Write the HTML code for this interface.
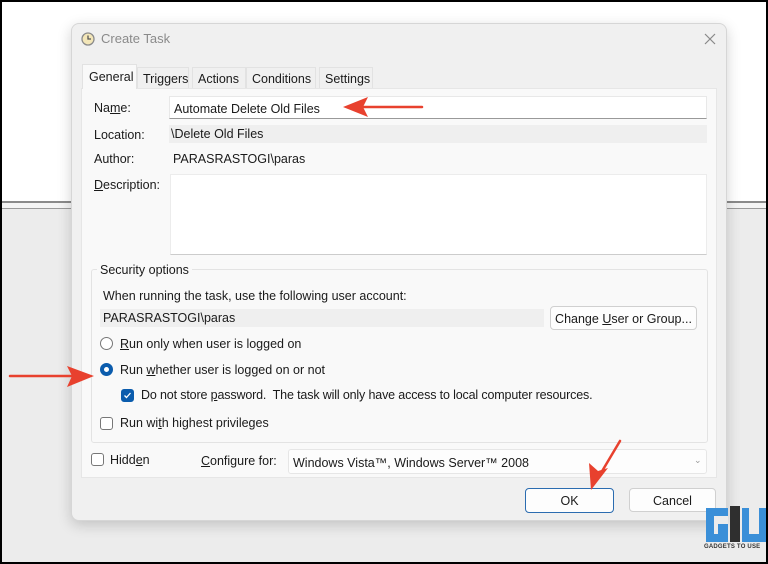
<!DOCTYPE html>
<html><head><style>
*{box-sizing:border-box;margin:0;padding:0}
body{width:768px;height:564px;overflow:hidden;position:relative;background:#000;font-family:"Liberation Sans",sans-serif;font-size:12.5px;color:#1a1a1a}
.a{position:absolute}
u{text-decoration:underline}
.tab{position:absolute;top:67px;height:21px;background:#f0f0f0;border:1px solid #e2e2e2;border-bottom:none;padding:4px 0 0 5px;font-size:12.5px}
.lbl{position:absolute;left:94px}
.rb{position:absolute;width:13px;height:13px;border-radius:50%;border:1px solid #777;background:#fff}
.cb{position:absolute;width:13px;height:13px;border-radius:3px;border:1px solid #777;background:#fff}
.btn{position:absolute;background:#fdfdfd;border:1px solid #d0d0d0;border-radius:4px;text-align:center}
</style></head><body>
<div class="a" style="left:2px;top:2px;width:764px;height:199px;background:#fff"></div>
<div class="a" style="left:2px;top:201px;width:764px;height:2px;background:#8a8a8a"></div>
<div class="a" style="left:2px;top:203px;width:764px;height:5px;background:#f4f4f4"></div>
<div class="a" style="left:2px;top:208px;width:764px;height:1px;background:#9a9a9a"></div>
<div class="a" style="left:2px;top:209px;width:764px;height:353px;background:#ececec"></div>

<div class="a" style="left:71px;top:23px;width:656px;height:498px;background:#f0f0f0;border:1px solid #d6d6d6;border-radius:8px;box-shadow:0 4px 14px rgba(0,0,0,.18)"></div>
<svg class="a" style="left:81px;top:32px" width="14" height="14"><circle cx="7" cy="7" r="6" fill="#f3e6b8" stroke="#8a8a8a" stroke-width="1.3"/><path d="M7 3.5V7H10" stroke="#555" stroke-width="1.3" fill="none"/></svg>
<div class="a" style="left:101px;top:31px;font-size:13px;color:#8a8a8a">Create Task</div>
<svg class="a" style="left:704px;top:33px" width="12" height="12"><path d="M1 1L11 11M11 1L1 11" stroke="#888" stroke-width="1.2"/></svg>

<div class="a" style="left:81px;top:88px;width:636px;height:390px;background:#f9f9f9;border:1px solid #e6e6e6"></div>
<div class="tab" style="left:137px;width:52px">Triggers</div>
<div class="tab" style="left:192px;width:54px">Actions</div>
<div class="tab" style="left:246px;width:70px">Conditions</div>
<div class="tab" style="left:319px;width:54px">Settings</div>
<div class="a" style="left:82px;top:64px;width:55px;height:25px;background:#f9f9f9;border:1px solid #e2e2e2;border-bottom:none;padding:5px 0 0 6px">General</div>

<div class="lbl" style="top:101px">Na<u>m</u>e:</div>
<div class="a" style="left:169px;top:96px;width:538px;height:23px;background:#fff;border:1px solid #e8e8e8;border-bottom:1px solid #999;padding:5px 4px">Automate Delete Old Files</div>
<div class="lbl" style="top:128px">Location:</div>
<div class="a" style="left:169px;top:125px;width:538px;height:18px;background:#efefef;padding:2px 2px">\Delete Old Files</div>
<div class="lbl" style="top:152px">Author:</div>
<div class="a" style="left:173px;top:152px">PARASRASTOGI\paras</div>
<div class="lbl" style="top:178px"><u>D</u>escription:</div>
<div class="a" style="left:170px;top:174px;width:537px;height:81px;background:#fff;border:1px solid #ececec;border-bottom-color:#ccc"></div>

<div class="a" style="left:91px;top:269px;width:617px;height:174px;border:1px solid #e3e3e3;border-radius:3px"></div>
<div class="a" style="left:97px;top:263px;background:#f9f9f9;padding:0 3px">Security options</div>
<div class="a" style="left:103px;top:289px">When running the task, use the following user account:</div>
<div class="a" style="left:100px;top:309px;width:444px;height:18px;background:#efefef;padding:2px 3px">PARASRASTOGI\paras</div>
<div class="btn" style="left:550px;top:306px;width:147px;height:24px;padding-top:5px"><span>Change <u>U</u>ser or Group...</span></div>
<div class="rb" style="left:100px;top:337px"></div>
<div class="a" style="left:120px;top:337px"><u>R</u>un only when user is logged on</div>
<div class="rb" style="left:100px;top:363px;border:4px solid #0b5cad"></div>
<div class="a" style="left:120px;top:363px">Run <u>w</u>hether user is logged on or not</div>
<div class="cb" style="left:121px;top:389px;background:#0b5cad;border-color:#0b5cad"><svg width="11" height="11" style="position:absolute;left:0;top:0"><path d="M2.5 5.5L4.5 7.5L8.5 3" stroke="#fff" stroke-width="1.3" fill="none"/></svg></div>
<div class="a" style="left:141px;top:388px;letter-spacing:-0.15px">Do not store <u>p</u>assword.&nbsp; The task will only have access to local computer resources.</div>
<div class="cb" style="left:100px;top:417px"></div>
<div class="a" style="left:120px;top:416px">Run wi<u>t</u>h highest privileges</div>

<div class="cb" style="left:91px;top:453px"></div>
<div class="a" style="left:110px;top:453px">Hidd<u>e</u>n</div>
<div class="a" style="left:201px;top:454px"><u>C</u>onfigure for:</div>
<div class="a" style="left:288px;top:449px;width:419px;height:25px;background:#fdfdfd;border:1px solid #e6e6e6;border-radius:3px;padding:6px 4px">Windows Vista™, Windows Server™ 2008</div>
<div class="a" style="left:694px;top:455px;font-size:9px;color:#999">⌄</div>

<div class="btn" style="left:525px;top:488px;width:89px;height:25px;border:1.5px solid #2b6cb0;padding-top:5px">OK</div>
<div class="btn" style="left:629px;top:488px;width:87px;height:24px;padding-top:5px">Cancel</div>

<svg class="a" style="left:0;top:0" width="768" height="564">
<g fill="#e8412e" stroke="#e8412e" stroke-linecap="round">
<path d="M422 107L355 107" stroke-width="2.5"/><path d="M343 107L368 97L363 107L368 117Z" stroke="none"/>
<path d="M10 376L75 376" stroke-width="2.5"/><path d="M94 376L67 366L72 376L67 387Z" stroke="none"/>
<path d="M620 441L598 478" stroke-width="2.5"/><path d="M591 490L589 463L598 471L608 468Z" stroke="none"/>
</g>
<g transform="translate(706,506)">
<rect x="0" y="2" width="22" height="34" fill="#3a8fd8"/><rect x="8" y="10" width="14" height="18" fill="#ececec"/><rect x="12" y="18" width="10" height="10" fill="#3a8fd8"/>
<rect x="24" y="0" width="10" height="36" fill="#2f2f2f"/><rect x="36" y="2" width="24" height="34" fill="#3a8fd8"/><rect x="43" y="2" width="10" height="26" fill="#ececec"/>
</g>
</svg>
<div class="a" style="left:704px;top:544px;font-size:6px;font-weight:bold;color:#333;letter-spacing:.2px">GADGETS TO USE</div>
</body></html>
